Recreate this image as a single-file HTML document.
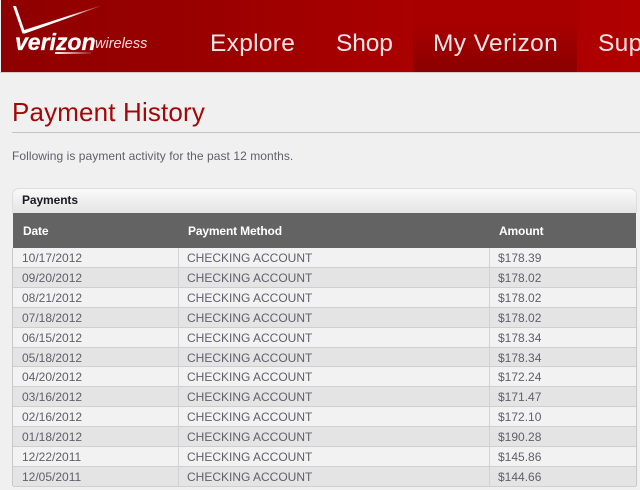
<!DOCTYPE html>
<html>
<head>
<meta charset="utf-8">
<style>
html,body{margin:0;padding:0;width:640px;height:490px;overflow:hidden;background:#f0f0f0;font-family:"Liberation Sans",Arial,sans-serif;}
.a{position:absolute;white-space:nowrap;}
#hdr{left:1px;top:0;width:639px;height:72px;background:linear-gradient(90deg,#8f0000 0,#990000 30%,#a80000 60%,#b00000 100%);}
#hl{left:0;top:72px;width:640px;height:1px;background:#d8c8c8;}
#act{left:413px;top:0;width:164px;height:72px;background:linear-gradient(180deg,#a80000 0,#a80000 35%,#8a0000 100%);}
.nav{top:28px;font-size:24.5px;line-height:32px;color:#f4e6e6;letter-spacing:.3px;}
#h1{left:12px;top:96px;font-size:26px;line-height:32px;color:#a30808;letter-spacing:.15px;}
#rule{left:12px;top:132px;width:628px;height:1px;background:#c4c4c4;}
#intro{left:12px;top:149px;font-size:12px;line-height:14px;color:#60606a;letter-spacing:.06px;}
#panel{left:12px;top:188px;width:625px;height:25px;box-sizing:border-box;border:1px solid #dedede;border-bottom:none;border-radius:7px 7px 0 0;background:linear-gradient(180deg,#fafafa 0,#e4e4e4 100%);}
#ptitle{left:22px;top:193px;font-size:12px;line-height:14px;font-weight:bold;color:#1a1a22;letter-spacing:-.1px;}
#thead{left:13px;top:213px;width:623px;height:35px;background:#636363;}
.th{top:224px;font-size:12px;line-height:14px;font-weight:bold;color:#fff;letter-spacing:-.15px;}
.row{left:13px;width:623px;box-sizing:border-box;border-bottom:1px solid #cfcfcf;}
.c{font-size:12px;line-height:14px;color:#60606a;}
.v{width:1px;top:248px;height:238px;background:#d2d2d2;}
</style>
</head>
<body>
<div class="a" id="hdr"></div>
<div class="a" id="hl"></div>
<div class="a" id="act"></div>

<svg class="a" style="left:10px;top:3px" width="95" height="32" viewBox="0 0 95 32">
<defs><linearGradient id="g" x1="0" x2="1" y1="0" y2="0"><stop offset="0" stop-color="#fff"/><stop offset=".65" stop-color="#fff"/><stop offset="1" stop-color="#fff" stop-opacity=".1"/></linearGradient></defs>
<path d="M3 3 L12.5 30.5 L15 30.5 L90 3.5 L90 2.7 L14.3 27 L6 3 Z" fill="url(#g)"/>
</svg>
<div class="a" style="left:15px;top:30px;font-size:23px;line-height:24px;font-weight:bold;font-style:italic;color:#fff;-webkit-text-stroke:.3px #fff;">verizon</div>
<div class="a" style="left:95px;top:36px;font-size:14.5px;line-height:16px;font-style:italic;color:#f0dcdc;">wireless</div>
<div class="a" style="left:55px;top:52px;width:36px;height:2px;background:linear-gradient(90deg,#fff,rgba(255,255,255,.1));"></div>

<div class="a nav" style="left:210px;">Explore</div>
<div class="a nav" style="left:336px;letter-spacing:-.1px;">Shop</div>
<div class="a nav" style="left:433px;letter-spacing:.4px;">My Verizon</div>
<div class="a nav" style="left:598px;">Sup</div>

<div class="a" id="h1">Payment History</div>
<div class="a" id="rule"></div>
<div class="a" id="intro">Following is payment activity for the past 12 months.</div>

<div class="a" id="panel"></div>
<div class="a" id="ptitle">Payments</div>
<div class="a" id="thead"></div>
<div class="a th" style="left:23px">Date</div>
<div class="a th" style="left:188px">Payment Method</div>
<div class="a th" style="left:499px">Amount</div>

<div class="a row" style="top:248px;height:20px;background:#f2f2f2"></div>
<div class="a row" style="top:268px;height:20px;background:#e4e4e4"></div>
<div class="a row" style="top:288px;height:20px;background:#f2f2f2"></div>
<div class="a row" style="top:308px;height:20px;background:#e4e4e4"></div>
<div class="a row" style="top:328px;height:20px;background:#f2f2f2"></div>
<div class="a row" style="top:348px;height:19px;background:#e4e4e4"></div>
<div class="a row" style="top:367px;height:20px;background:#f2f2f2"></div>
<div class="a row" style="top:387px;height:20px;background:#e4e4e4"></div>
<div class="a row" style="top:407px;height:20px;background:#f2f2f2"></div>
<div class="a row" style="top:427px;height:20px;background:#e4e4e4"></div>
<div class="a row" style="top:447px;height:20px;background:#f2f2f2"></div>
<div class="a row" style="top:467px;height:20px;background:#e4e4e4"></div>

<div class="a v" style="left:12px;background:#c8c8c8"></div>
<div class="a v" style="left:178px"></div>
<div class="a v" style="left:489px"></div>
<div class="a v" style="left:636px;background:#c8c8c8"></div>

<div class="a c" style="left:22px;top:251px">10/17/2012</div><div class="a c" style="left:187px;top:251px">CHECKING ACCOUNT</div><div class="a c" style="left:498px;top:251px">$178.39</div>
<div class="a c" style="left:22px;top:271px">09/20/2012</div><div class="a c" style="left:187px;top:271px">CHECKING ACCOUNT</div><div class="a c" style="left:498px;top:271px">$178.02</div>
<div class="a c" style="left:22px;top:291px">08/21/2012</div><div class="a c" style="left:187px;top:291px">CHECKING ACCOUNT</div><div class="a c" style="left:498px;top:291px">$178.02</div>
<div class="a c" style="left:22px;top:311px">07/18/2012</div><div class="a c" style="left:187px;top:311px">CHECKING ACCOUNT</div><div class="a c" style="left:498px;top:311px">$178.02</div>
<div class="a c" style="left:22px;top:331px">06/15/2012</div><div class="a c" style="left:187px;top:331px">CHECKING ACCOUNT</div><div class="a c" style="left:498px;top:331px">$178.34</div>
<div class="a c" style="left:22px;top:351px">05/18/2012</div><div class="a c" style="left:187px;top:351px">CHECKING ACCOUNT</div><div class="a c" style="left:498px;top:351px">$178.34</div>
<div class="a c" style="left:22px;top:370px">04/20/2012</div><div class="a c" style="left:187px;top:370px">CHECKING ACCOUNT</div><div class="a c" style="left:498px;top:370px">$172.24</div>
<div class="a c" style="left:22px;top:390px">03/16/2012</div><div class="a c" style="left:187px;top:390px">CHECKING ACCOUNT</div><div class="a c" style="left:498px;top:390px">$171.47</div>
<div class="a c" style="left:22px;top:410px">02/16/2012</div><div class="a c" style="left:187px;top:410px">CHECKING ACCOUNT</div><div class="a c" style="left:498px;top:410px">$172.10</div>
<div class="a c" style="left:22px;top:430px">01/18/2012</div><div class="a c" style="left:187px;top:430px">CHECKING ACCOUNT</div><div class="a c" style="left:498px;top:430px">$190.28</div>
<div class="a c" style="left:22px;top:450px">12/22/2011</div><div class="a c" style="left:187px;top:450px">CHECKING ACCOUNT</div><div class="a c" style="left:498px;top:450px">$145.86</div>
<div class="a c" style="left:22px;top:470px">12/05/2011</div><div class="a c" style="left:187px;top:470px">CHECKING ACCOUNT</div><div class="a c" style="left:498px;top:470px">$144.66</div>
</body>
</html>
